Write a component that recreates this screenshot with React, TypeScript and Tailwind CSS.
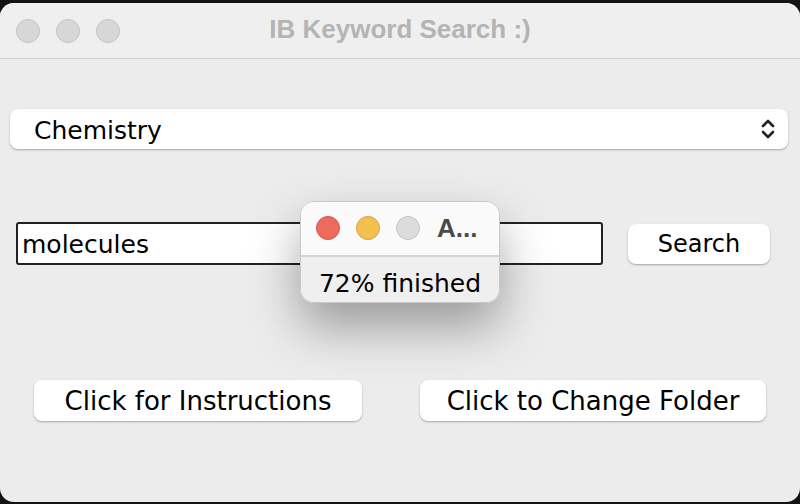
import React from "react";

const ui = { fontFamily: '"DejaVu Sans", "Noto Sans", sans-serif' };

function Lights({ colored = false }: { colored?: boolean }) {
  const dots = colored
    ? ["bg-[#ec6a5e] border-[#d05548]", "bg-[#f4bf4f] border-[#d6a243]", "bg-[#dcdcdc] border-[#c4c4c4]"]
    : ["bg-[#d7d7d7] border-[#c2c2c2]", "bg-[#d7d7d7] border-[#c2c2c2]", "bg-[#d7d7d7] border-[#c2c2c2]"];
  return (
    <div className="flex gap-[16px]">
      {dots.map((c, i) => (
        <div key={i} className={`w-[24px] h-[24px] rounded-full border ${c}`} />
      ))}
    </div>
  );
}

export default function App() {
  return (
    <div className="w-[800px] h-[504px] bg-[#121314] pt-[3px] pb-[2px]" style={ui}>
      <div className="relative w-full h-full bg-[#ececec] rounded-[14px] overflow-hidden">
        {/* title bar */}
        <div className="relative h-[56px] bg-[#efefef] border-b border-[#cfcfcf] flex items-center pl-[16px]">
          <Lights />
          <div
            className="absolute inset-0 flex items-center justify-center text-[26px] font-bold text-[#b4b4b4] pb-[2px]"
            style={{ fontFamily: '"Liberation Sans", Arial, sans-serif' }}
          >
            IB Keyword Search :)
          </div>
        </div>

        {/* body */}
        <div className="flex flex-col text-[25px] text-black">
          <div className="mt-[50px] mx-[10px] mr-[12px] h-[40px] bg-white rounded-[8px] shadow-[0_1px_2px_rgba(0,0,0,0.3)] flex items-center justify-between pl-[24px] pr-[12px]">
            <span className="pt-[3px]">Chemistry</span>
            <svg width="16" height="24" viewBox="0 0 16 24" fill="none" stroke="#222" strokeWidth="2.6" strokeLinecap="round" strokeLinejoin="round">
              <path d="M3 9 L8 4 L13 9" />
              <path d="M3 15 L8 20 L13 15" />
            </svg>
          </div>

          <div className="mt-[73px] flex items-center pl-[16px]">
            <div className="w-[587px] h-[43px] border-2 border-[#222] rounded-[3px] bg-white flex items-center pl-[4px] pt-[2px]">
              molecules
            </div>
            <button className="ml-[25px] w-[142px] h-[40px] bg-white rounded-[8px] shadow-[0_1px_2px_rgba(0,0,0,0.3)] text-[24px]">
              Search
            </button>
          </div>

          <div className="mt-[115px] flex items-center text-[26px]">
            <button className="ml-[34px] w-[328px] h-[41px] bg-white rounded-[8px] shadow-[0_1px_2px_rgba(0,0,0,0.3)] pt-[1px]">
              Click for Instructions
            </button>
            <button className="ml-[58px] w-[346px] h-[41px] bg-white rounded-[8px] shadow-[0_1px_2px_rgba(0,0,0,0.3)] pt-[1px]">
              Click to Change Folder
            </button>
          </div>
        </div>

        {/* progress popup */}
        <div className="absolute left-[300px] top-[198px] w-[200px] h-[102px] rounded-[14px] overflow-hidden border border-[#c8c8c8] shadow-[0_24px_50px_rgba(0,0,0,0.35)] flex flex-col">
          <div className="h-[57px] bg-[#fafafa] border-b-2 border-[#d4d4d4] flex items-center pl-[15px]">
            <Lights colored />
            <span className="ml-[17px] text-[26px] font-bold text-[#4a4a4a]" style={{ fontFamily: '"Liberation Sans", Arial, sans-serif' }}>
              A...
            </span>
          </div>
          <div className="flex-1 bg-[#efefef] flex items-center justify-center text-[25px] text-black pt-[8px]">
            72% finished
          </div>
        </div>
      </div>
    </div>
  );
}
